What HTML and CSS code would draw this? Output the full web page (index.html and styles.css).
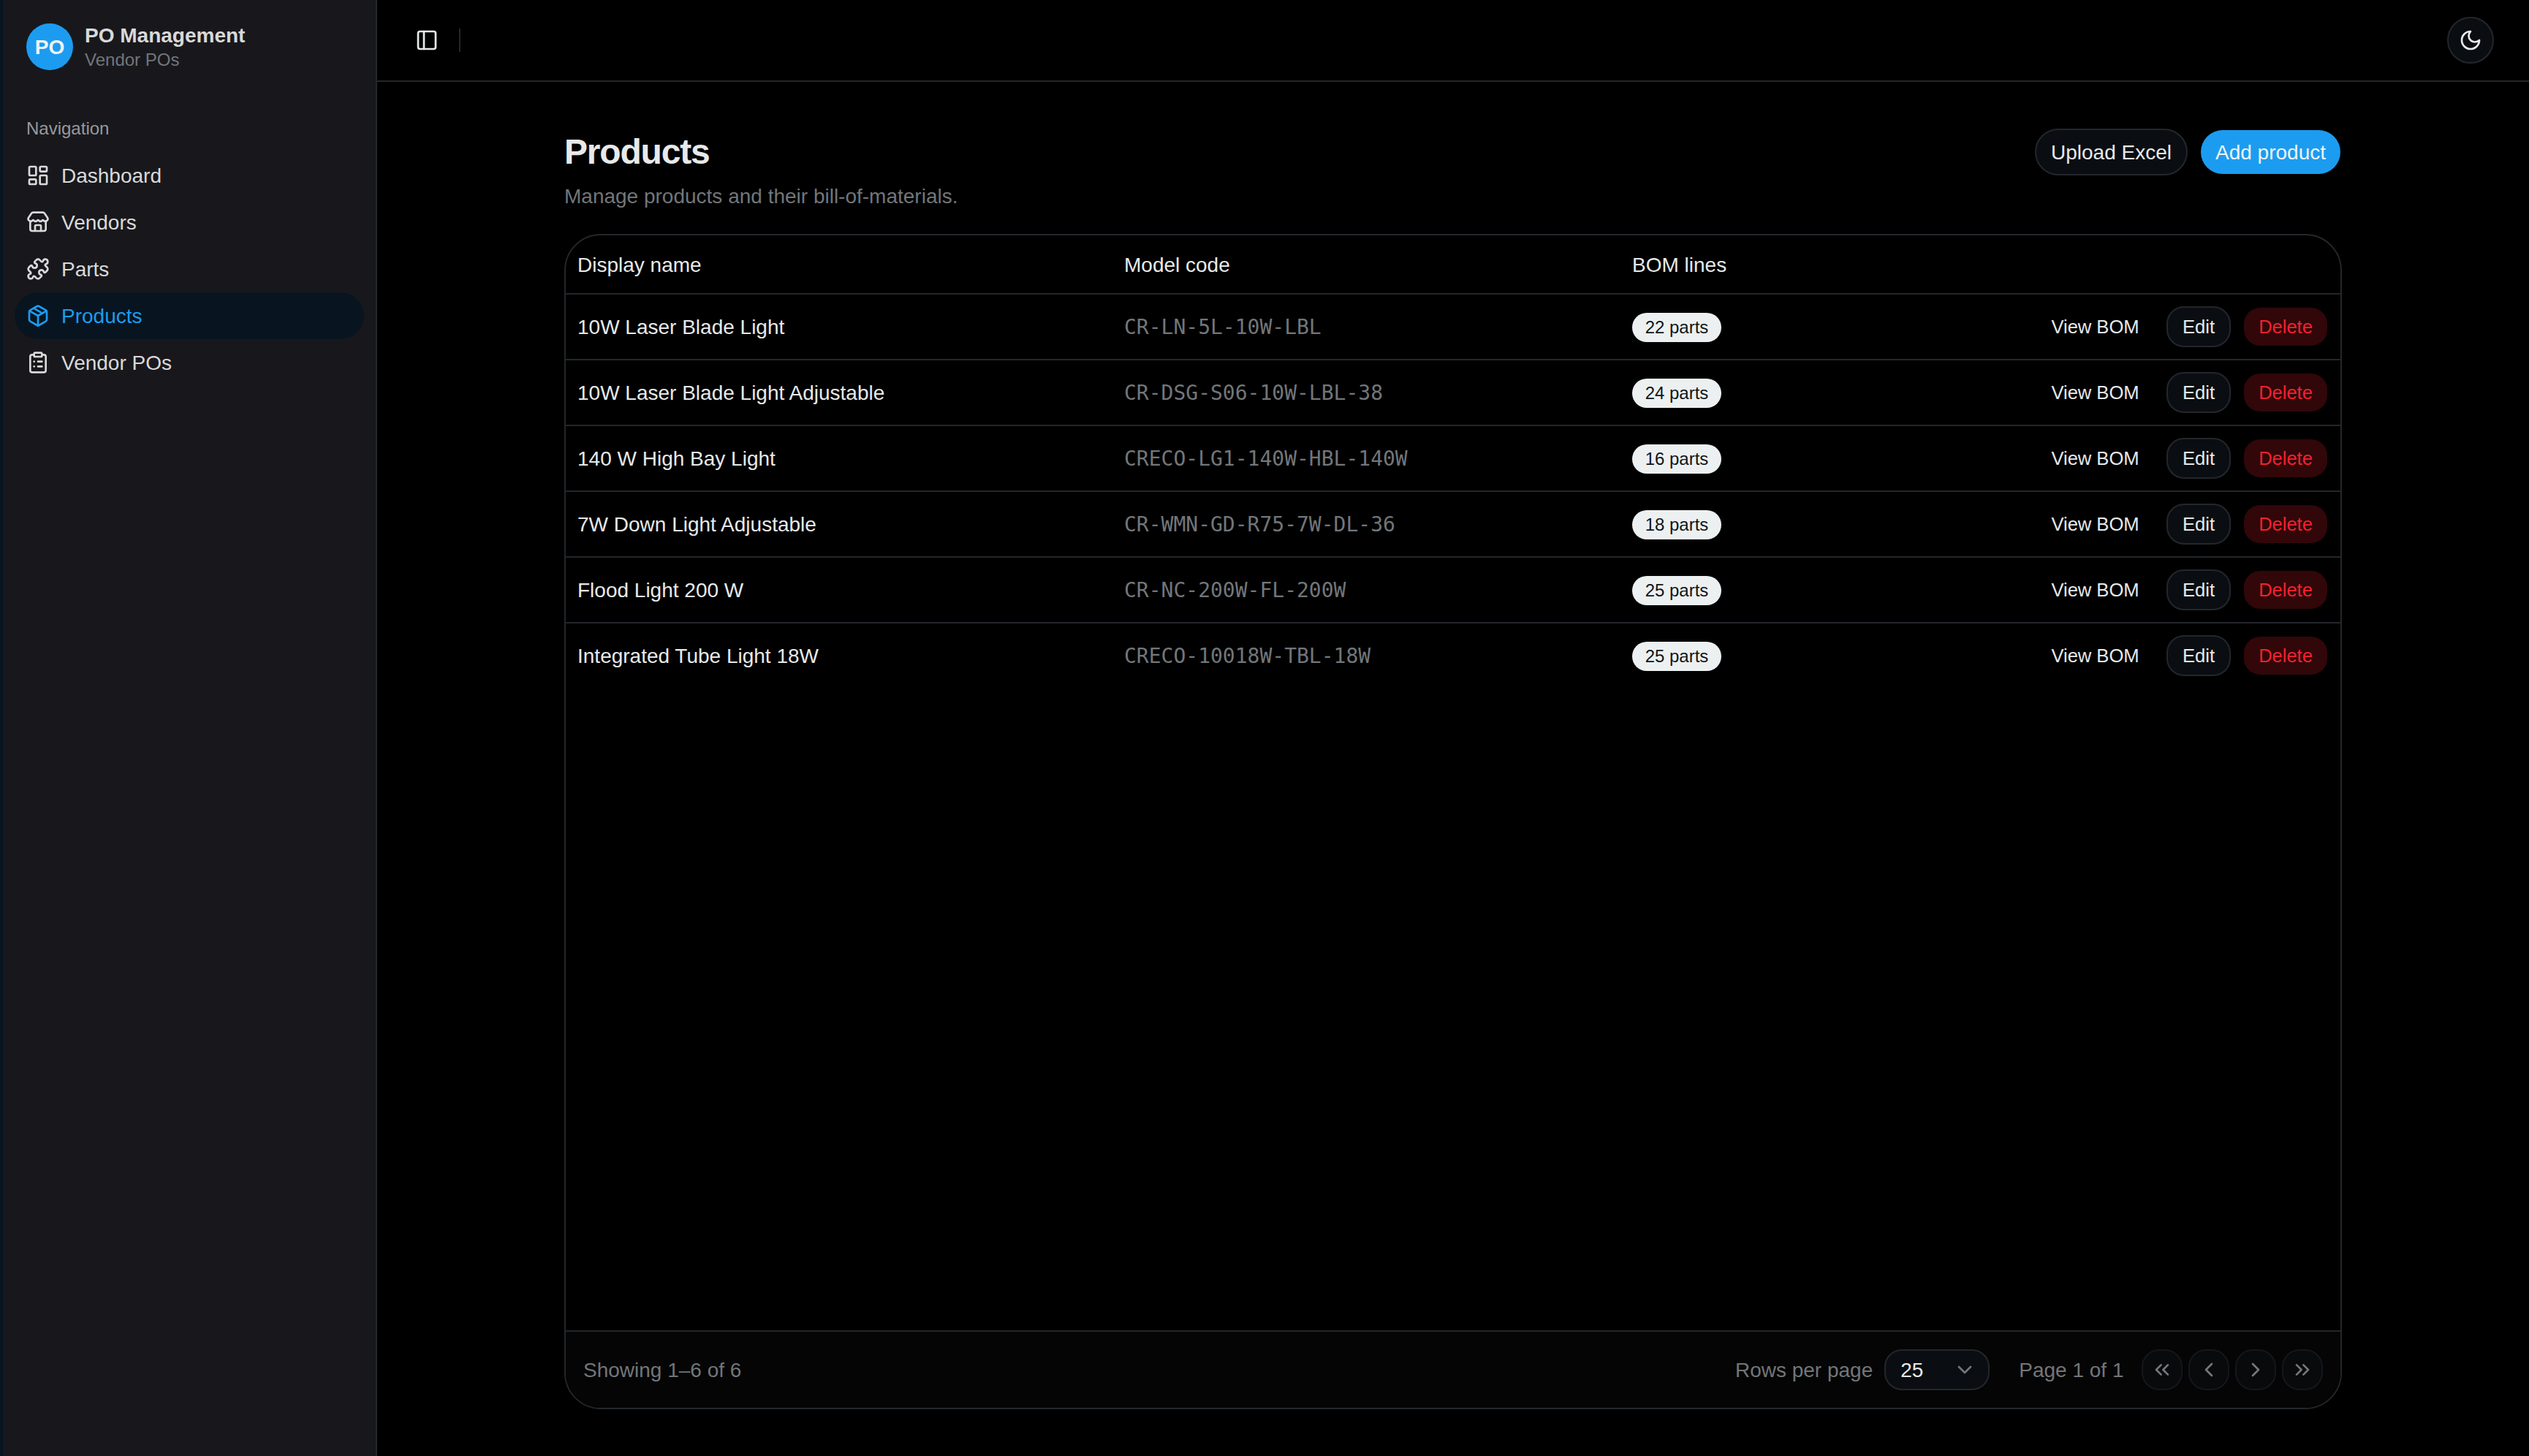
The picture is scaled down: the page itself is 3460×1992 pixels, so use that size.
FILE: index.html
```html
<!DOCTYPE html>
<html lang="en">
<head>
<meta charset="utf-8">
<title>PO Management</title>
<link rel="stylesheet" href="styles.css">
</head>
<body>
<svg class="sprite" aria-hidden="true">
  <symbol id="dashboard" viewBox="0 0 24 24"><rect width="7" height="9" x="3" y="3" rx="1"/><rect width="7" height="5" x="14" y="3" rx="1"/><rect width="7" height="9" x="14" y="12" rx="1"/><rect width="7" height="5" x="3" y="16" rx="1"/></symbol>
  <symbol id="store" viewBox="0 0 24 24"><path d="M15 21v-5a1 1 0 0 0-1-1h-4a1 1 0 0 0-1 1v5"/><path d="M17.774 10.31a1.12 1.12 0 0 0-1.549 0 2.5 2.5 0 0 1-3.451 0 1.12 1.12 0 0 0-1.548 0 2.5 2.5 0 0 1-3.452 0 1.12 1.12 0 0 0-1.549 0 2.5 2.5 0 0 1-3.77-3.248l2.889-4.184A2 2 0 0 1 7 2h10a2 2 0 0 1 1.653.873l2.895 4.192a2.5 2.5 0 0 1-3.774 3.244"/><path d="M4 10.95V19a2 2 0 0 0 2 2h12a2 2 0 0 0 2-2v-8.05"/></symbol>
  <symbol id="puzzle" viewBox="0 0 24 24"><path d="M15.39 4.39a1 1 0 0 0 1.68-.474 2.5 2.5 0 1 1 3.014 3.015 1 1 0 0 0-.474 1.68l1.683 1.682a2.414 2.414 0 0 1 0 3.414L19.61 15.39a1 1 0 0 1-1.68-.474 2.5 2.5 0 1 0-3.014 3.015 1 1 0 0 1 .474 1.68l-1.683 1.682a2.414 2.414 0 0 1-3.414 0L8.61 19.61a1 1 0 0 0-1.68.474 2.5 2.5 0 1 1-3.014-3.015 1 1 0 0 0 .474-1.68l-1.683-1.682a2.414 2.414 0 0 1 0-3.414L4.39 8.61a1 1 0 0 1 1.68.474 2.5 2.5 0 1 0 3.014-3.015 1 1 0 0 1-.474-1.68l1.683-1.682a2.414 2.414 0 0 1 3.414 0z"/></symbol>
  <symbol id="package" viewBox="0 0 24 24"><path d="M11 21.73a2 2 0 0 0 2 0l7-4A2 2 0 0 0 21 16V8a2 2 0 0 0-1-1.73l-7-4a2 2 0 0 0-2 0l-7 4A2 2 0 0 0 3 8v8a2 2 0 0 0 1 1.73z"/><path d="M12 22V12"/><path d="M3.29 7 12 12l8.71-5"/><path d="m7.5 4.27 9 5.15"/></symbol>
  <symbol id="clipboard" viewBox="0 0 24 24"><rect width="8" height="4" x="8" y="2" rx="1"/><path d="M16 4h2a2 2 0 0 1 2 2v14a2 2 0 0 1-2 2H6a2 2 0 0 1-2-2V6a2 2 0 0 1 2-2h2"/><path d="M12 11h4"/><path d="M12 16h4"/><path d="M8 11h.01"/><path d="M8 16h.01"/></symbol>
  <symbol id="panel" viewBox="0 0 24 24"><rect width="18" height="18" x="3" y="3" rx="2"/><path d="M9 3v18"/></symbol>
  <symbol id="moon" viewBox="0 0 24 24"><path d="M12 3a6 6 0 0 0 9 9 9 9 0 1 1-9-9Z"/></symbol>
  <symbol id="down" viewBox="0 0 24 24"><path d="m6 9 6 6 6-6"/></symbol>
  <symbol id="first" viewBox="0 0 24 24"><path d="m11 17-5-5 5-5"/><path d="m18 17-5-5 5-5"/></symbol>
  <symbol id="prev" viewBox="0 0 24 24"><path d="m15 18-6-6 6-6"/></symbol>
  <symbol id="next" viewBox="0 0 24 24"><path d="m9 18 6-6-6-6"/></symbol>
  <symbol id="last" viewBox="0 0 24 24"><path d="m6 17 5-5-5-5"/><path d="m13 17 5-5-5-5"/></symbol>
</svg>
<div class="app">
  <aside class="sidebar">
    <div class="brand">
      <div class="logo">PO</div>
      <div class="brand-text"><span class="brand-name">PO Management</span><span class="brand-sub">Vendor POs</span></div>
    </div>
    <div class="nav-label">Navigation</div>
    <nav class="nav">
      <a class="nav-item"><svg class="icon"><use href="#dashboard"/></svg>Dashboard</a>
      <a class="nav-item"><svg class="icon"><use href="#store"/></svg>Vendors</a>
      <a class="nav-item"><svg class="icon"><use href="#puzzle"/></svg>Parts</a>
      <a class="nav-item active"><svg class="icon"><use href="#package"/></svg>Products</a>
      <a class="nav-item"><svg class="icon"><use href="#clipboard"/></svg>Vendor POs</a>
    </nav>
  </aside>
  <div class="main">
    <header class="topbar">
      <svg class="icon"><use href="#panel"/></svg>
      <span class="divider"></span>
      <button class="theme"><svg class="icon"><use href="#moon"/></svg></button>
    </header>
    <main class="content">
      <div class="page-head">
        <div>
          <h1>Products</h1>
          <p class="subtitle">Manage products and their bill-of-materials.</p>
        </div>
        <div class="actions">
          <button class="btn outline upload">Upload Excel</button>
          <button class="btn primary add">Add product</button>
        </div>
      </div>
      <section class="card">
        <div class="row head"><span>Display name</span><span>Model code</span><span>BOM lines</span><span></span></div>
        <div class="row"><span>10W Laser Blade Light</span><span class="code">CR-LN-5L-10W-LBL</span><span class="cell"><b class="badge">22 parts</b></span><span class="row-actions"><button class="btn sm ghost">View BOM</button><button class="btn sm outline edit">Edit</button><button class="btn sm danger">Delete</button></span></div>
        <div class="row"><span>10W Laser Blade Light Adjustable</span><span class="code">CR-DSG-S06-10W-LBL-38</span><span class="cell"><b class="badge">24 parts</b></span><span class="row-actions"><button class="btn sm ghost">View BOM</button><button class="btn sm outline edit">Edit</button><button class="btn sm danger">Delete</button></span></div>
        <div class="row"><span>140 W High Bay Light</span><span class="code">CRECO-LG1-140W-HBL-140W</span><span class="cell"><b class="badge">16 parts</b></span><span class="row-actions"><button class="btn sm ghost">View BOM</button><button class="btn sm outline edit">Edit</button><button class="btn sm danger">Delete</button></span></div>
        <div class="row"><span>7W Down Light Adjustable</span><span class="code">CR-WMN-GD-R75-7W-DL-36</span><span class="cell"><b class="badge">18 parts</b></span><span class="row-actions"><button class="btn sm ghost">View BOM</button><button class="btn sm outline edit">Edit</button><button class="btn sm danger">Delete</button></span></div>
        <div class="row"><span>Flood Light 200 W</span><span class="code">CR-NC-200W-FL-200W</span><span class="cell"><b class="badge">25 parts</b></span><span class="row-actions"><button class="btn sm ghost">View BOM</button><button class="btn sm outline edit">Edit</button><button class="btn sm danger">Delete</button></span></div>
        <div class="row"><span>Integrated Tube Light 18W</span><span class="code">CRECO-10018W-TBL-18W</span><span class="cell"><b class="badge">25 parts</b></span><span class="row-actions"><button class="btn sm ghost">View BOM</button><button class="btn sm outline edit">Edit</button><button class="btn sm danger">Delete</button></span></div>
        <footer class="pager">
          <span class="showing">Showing 1–6 of 6</span>
          <span class="per-page">Rows per page</span>
          <div class="select"><span>25</span><svg class="icon"><use href="#down"/></svg></div>
          <span class="page-num">Page 1 of 1</span>
          <div class="pages">
            <button class="page-btn"><svg class="icon"><use href="#first"/></svg></button>
            <button class="page-btn"><svg class="icon"><use href="#prev"/></svg></button>
            <button class="page-btn"><svg class="icon"><use href="#next"/></svg></button>
            <button class="page-btn"><svg class="icon"><use href="#last"/></svg></button>
          </div>
        </footer>
      </section>
    </main>
  </div>
</div>
</body>
</html>
```
FILE: styles.css
```css
* { box-sizing: border-box; }
body {
  margin: 0;
  background: #000;
  color: #e7e9ea;
  font: 28px/40px "Liberation Sans", Arial, sans-serif;
}
button { font: inherit; color: inherit; margin: 0; padding: 0; }
.sprite { display: none; }
.icon {
  width: 32px;
  height: 32px;
  flex: none;
  fill: none;
  stroke: currentColor;
  stroke-width: 2;
  stroke-linecap: round;
  stroke-linejoin: round;
}
.app { display: flex; height: 1992px; }

/* Sidebar */
.sidebar {
  width: 516px;
  flex: none;
  padding: 0 16px;
  background: #18181c;
  border-left: 4px solid #071521;
  border-right: 2px solid #23272b;
  color: #d9d9d9;
}
.brand { display: flex; align-items: center; gap: 16px; padding: 32px 16px 0; height: 96px; }
.logo {
  width: 64px;
  height: 64px;
  border-radius: 50%;
  background: #1c9cf0;
  color: #f0f3f4;
  font-weight: 700;
  line-height: 66px;
  text-align: center;
}
.brand-text { display: flex; flex-direction: column; }
.brand-name { font-weight: 700; line-height: 35px; }
.brand-sub { font-size: 24px; line-height: 32px; color: #72767a; }
.nav-label { margin: 48px 16px 0; height: 64px; font-size: 24px; line-height: 64px; color: #98999b; }
.nav-item { display: flex; align-items: center; gap: 16px; height: 64px; padding: 2px 16px 0; border-radius: 32px; }
.nav-item .icon { margin-top: -2px; }
.nav-item.active { background: #081521; color: #1c9cf0; }

/* Main column */
.main { flex: 1; display: flex; flex-direction: column; }
.topbar {
  display: flex;
  align-items: center;
  height: 112px;
  padding: 0 48px 0 52px;
  border-bottom: 2px solid #23272b;
  flex: none;
}
.divider { width: 2px; height: 32px; margin-left: 28px; background: #23272b; }
.theme {
  display: flex;
  align-items: center;
  justify-content: center;
  width: 64px;
  height: 64px;
  margin-left: auto;
  border: 2px solid #23272b;
  border-radius: 50%;
  background: #0a0e12;
}
.content { flex: 1; display: flex; flex-direction: column; width: 2432px; margin: 0 auto; padding: 64px 0; }
.page-head { display: flex; justify-content: space-between; height: 144px; }
h1 { margin: 0; font-size: 48px; line-height: 64px; letter-spacing: -1.2px; }
.subtitle { margin: 9px 0 0; color: #72767a; }
.actions { display: flex; gap: 16px; }
.btn {
  height: 64px;
  padding-top: 2px;
  border: 2px solid transparent;
  border-radius: 32px;
  background: none;
  background-clip: padding-box;
  text-align: center;
  white-space: nowrap;
}
.btn.outline { background: #0a0e12; border-color: #23272b; }
.btn.primary { background: #1c9cf0; background-clip: padding-box; color: #f0f3f4; }
.upload { width: 209px; }
.add { width: 195px; }
.btn.sm { height: 56px; padding-top: 0; border-radius: 24px; font-size: 25.6px; letter-spacing: -0.05px; }
.btn.ghost { width: 163px; }
.btn.edit { width: 88px; }
.btn.danger { width: 118px; background: #310709; background-clip: padding-box; color: #f4212e; }

/* Products table */
.card {
  flex: 1;
  display: flex;
  flex-direction: column;
  border: 2px solid #23272b;
  border-radius: 50px;
  overflow: hidden;
}
.row {
  display: grid;
  grid-template-columns: 748px 695px 300px 1fr;
  align-items: center;
  height: 90px;
  flex: none;
  border-bottom: 2px solid #23272b;
}
.row > * { padding: 2px 16px 0; }
.row.head { height: 81px; }
.row:nth-last-child(2) { border-bottom-color: transparent; }
.row .code { font-family: "DejaVu Sans Mono", monospace; color: #72767a; }
.cell { display: flex; }
.badge {
  height: 40px;
  width: 122px;
  border-radius: 20px;
  background: #ecf0f1;
  color: #0f1419;
  font-size: 24px;
  font-weight: 400;
  line-height: 40px;
  text-align: center;
}
.row .row-actions { display: flex; justify-content: flex-end; gap: 16px; padding-top: 0; }

/* Pagination footer */
.pager {
  display: flex;
  align-items: center;
  height: 106px;
  margin-top: auto;
  padding: 0 24px;
  border-top: 2px solid #23272b;
  background: #050505;
  color: #72767a;
}
.pager span { padding-top: 2px; }
.showing { margin-right: auto; }
.select {
  display: flex;
  align-items: center;
  justify-content: space-between;
  width: 144px;
  height: 56px;
  margin: 0 40px 0 16px;
  padding: 0 16px 0 20px;
  border: 2px solid #23272b;
  border-radius: 24px;
  background: #0a0e12;
}
.select span { color: #e7e9ea; }
.pages { display: flex; gap: 8px; margin-left: 24.5px; }
.page-btn {
  display: flex;
  align-items: center;
  justify-content: center;
  width: 56px;
  height: 56px;
  border: 2px solid #14171b;
  border-radius: 24px;
  background: #080a0c;
  color: #75787a;
}
```
